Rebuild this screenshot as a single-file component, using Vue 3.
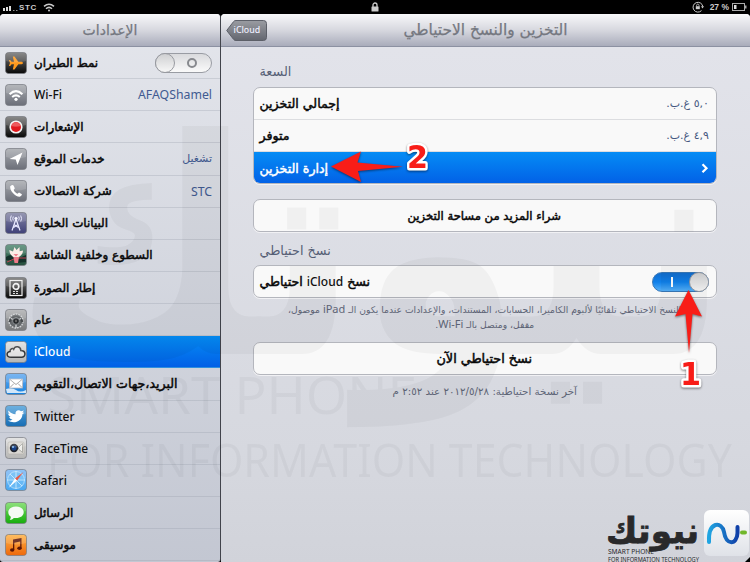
<script setup>
import { ref } from 'vue'

const airplane = ref(false)
const backup = ref(true)
const active = ref('cloud')

const items = [
  { id: 'plane', title: 'نمط الطيران', toggle: true },
  { id: 'wifi', title: 'Wi-Fi', value: 'AFAQShamel' },
  { id: 'notif', title: 'الإشعارات' },
  { id: 'location', title: 'خدمات الموقع', value: 'تشغيل', arValue: true },
  { id: 'phone', title: 'شركة الاتصالات', value: 'STC' },
  { id: 'cell', title: 'البيانات الخلوية' },
  { id: 'wall', title: 'السطوع وخلفية الشاشة' },
  { id: 'frame', title: 'إطار الصورة' },
  { id: 'gear', title: 'عام' },
  { id: 'cloud', title: 'iCloud' },
  { id: 'mail', title: 'البريد،جهات الاتصال،التقويم' },
  { id: 'twitter', title: 'Twitter' },
  { id: 'facetime', title: 'FaceTime' },
  { id: 'safari', title: 'Safari' },
  { id: 'messages', title: 'الرسائل' },
  { id: 'music', title: 'موسيقى' }
]

const isLatin = (s) => /^[A-Za-z]/.test(s)
</script>

<template>
  <div class="screen">
    <div class="status">
      <div class="status-left">
        <svg width="16" height="8" viewBox="0 0 16 8" fill="#ddd">
          <rect x="1" y="5" width="2" height="3" /><rect x="4" y="4" width="2" height="4" /><rect x="7" y="3" width="2" height="5" />
          <rect x="11" y="7" width="1.5" height="1" fill="#888" /><rect x="14" y="7" width="1.5" height="1" fill="#888" />
        </svg>
        <span class="carrier">STC</span>
        <svg width="12" height="9" viewBox="0 0 12 9" fill="none" stroke="#ccc" stroke-width="1.5">
          <path d="M1 3.4Q6-1 11 3.4M3 5.7Q6 3 9 5.7" /><circle cx="6" cy="7.6" r="1" fill="#ccc" stroke="none" />
        </svg>
      </div>
      <svg class="lock" width="8" height="10" viewBox="0 0 8 10">
        <path d="M2 5V3a2 2 0 0 1 4 0v2" fill="none" stroke="#ccc" stroke-width="1.3" /><rect x=".5" y="4.5" width="7" height="5" rx=".5" fill="#ccc" />
      </svg>
      <div class="status-right">
        <svg width="12" height="12" viewBox="0 0 12 12">
          <path d="M9.5 9.6A4.9 4.9 0 1 1 10.8 5.5" fill="none" stroke="#ccc" /><path d="M9 5.2h3l-1.5 2.4z" fill="#ccc" />
          <rect x="3.8" y="5.2" width="4" height="3" fill="#ccc" /><path d="M4.6 5.2V4.3a1.2 1.2 0 0 1 2.4 0v.9" fill="none" stroke="#ccc" stroke-width=".8" />
        </svg>
        <span class="percent">27 %</span>
        <svg width="15" height="8" viewBox="0 0 15 8">
          <rect x=".5" y=".5" width="12" height="7" fill="none" stroke="#aaa" /><rect x="2" y="2" width="2.5" height="4" fill="#ddd" /><rect x="13" y="2.5" width="1.5" height="3" fill="#aaa" />
        </svg>
      </div>
    </div>

    <div class="split">
      <aside class="side">
        <header class="bar"><h1 class="side-title" dir="rtl">الإعدادات</h1></header>
        <ul class="list">
          <li v-for="item in items" :key="item.id" class="item" :class="{ active: active === item.id }" @click="active = item.id">
            <svg class="icon" width="22" height="22" viewBox="0 0 22 22">
              <defs>
                <linearGradient :id="'g-' + item.id" x1="0" y1="0" x2="0" y2="1">
                  <stop offset="0" :class="['top', item.id]" /><stop offset="1" :class="['end', item.id]" />
                </linearGradient>
              </defs>
              <rect x=".5" y=".5" width="21" height="21" rx="3" :fill="`url(#g-${item.id})`" stroke="#777b82" stroke-opacity=".7" />
              <path v-if="item.id === 'plane'" fill="#ff9a1e" d="M18 11c0-.9-1.200-1.300-2.200-1.300h-2.500L9.500 4.500H7.800L9 9.700H6.600L5.200 8H3.900L5 11l-1.100 3h1.300l1.400-1.700H9l-1.200 5.200h1.700l3.800-5.200h2.500c1 0 2.200-.4 2.200-1.300z" />
              <g v-else-if="item.id === 'wifi'" fill="none" stroke="#fff" stroke-width="2.1">
                <path d="M4.6 10.2Q11 4.2 17.4 10.2M7.2 13Q11 9.8 14.8 13" /><circle cx="11" cy="15.3" r="1.6" fill="#fff" stroke="none" />
              </g>
              <g v-else-if="item.id === 'notif'">
                <circle cx="11" cy="11" r="6.6" fill="#f2f2f2" /><circle cx="11" cy="11" r="5" fill="#e0191e" /><path d="M6.6 10a4.5 4.5 0 0 1 8.8 0q-4.4 1.5-8.8 0" fill="#f77" opacity=".4" />
              </g>
              <path v-else-if="item.id === 'location'" fill="#fff" d="M17.5 4.5 12.5 17l-1.8-5.4L4.5 11z" />
              <path v-else-if="item.id === 'phone'" fill="#fff" d="M7 5 5.2 6.3c-.6 4.5 5 10.6 9.7 10.4l2-1.8c.2-.5-.1-.8-2.9-2.4l-1.6 1.2c-1.5-.5-3.5-2.6-3.7-4L9.8 8.4C9 5.6 8 4.5 7 5z" />
              <g v-else-if="item.id === 'cell'" fill="none" stroke="#e8e8ff" stroke-width="1">
                <path d="M11 7 7 18.5M11 7l4 11.5M9 12.5l4.5 3M13 12.5l-4.5 3" stroke-width="1.2" /><circle cx="11" cy="6.5" r="1.2" fill="#fff" />
                <path d="M8.3 4.5a4 4 0 0 0 0 4M13.7 4.5a4 4 0 0 1 0 4M6.3 3.5a6 6 0 0 0 0 6M15.7 3.5a6 6 0 0 1 0 6" />
              </g>
              <g v-else-if="item.id === 'wall'">
                <path d="M1 13q6-4 9 0l-3 4-6-1M12 15l9-4v7l-9 1" fill="#14312a" /><path d="M12 14h9M2 18l7-3" stroke="#c24454" />
                <path d="M11 14C6.5 13 4 9 4.5 6l3.5 1.5L9.5 3l2 3L14.5 3l.2 4.2 3.3-.7C18 10 15.500 13 11 14z" fill="#fde9e4" /><path d="M8.500 10l2.500 2.500 2.300-2.500M8.500 13l1 6h3.500l1-6z" fill="#ef7b89" />
              </g>
              <g v-else-if="item.id === 'frame'" fill="none" stroke="#f0f0f0">
                <rect x="5" y="3.5" width="12" height="15" stroke-width="1.2" /><circle cx="11" cy="9.5" r="2.8" stroke-width="1.7" /><path d="M8 14.5h6M8 16.5h6" stroke-width=".9" stroke-dasharray="2 1" />
              </g>
              <g v-else-if="item.id === 'gear'">
                <circle cx="11" cy="12" r="7" fill="#63676a" stroke="#d0d2d4" stroke-width="1.4" stroke-dasharray="1.8 .9" />
                <path d="M4.500 13a6.800 6.800 0 0 1 13 0" fill="none" stroke="#45494c" stroke-width="2" />
                <path d="M6 9.500 9 11M16 9.500 13 11M11 15v4" stroke="#d5d7d9" stroke-width="1.3" />
                <circle cx="11" cy="12" r="3.4" fill="#24282b" stroke="#8c9093" /><circle cx="11" cy="12" r="1.2" fill="#666" />
              </g>
              <path v-else-if="item.id === 'cloud'" d="M6 16.2c-5 0-5-5.4-1-5.700C5 7.5 8 7 8.700 8.200 9.900 4.500 15.800 5.100 15.800 9.600c5.500 0 5.300 6.600.7 6.600z" fill="#f4f4f4" fill-opacity=".6" stroke="#343638" stroke-width="1.5" />
              <g v-else-if="item.id === 'mail'">
                <path d="M1 16q6-2 10 1t10 0v3H2z" fill="#fff" opacity=".8" /><rect x="4.5" y="6" width="13" height="9" fill="#fff" stroke="#b8b8c0" stroke-width=".8" />
                <path d="m5 6.5 6 5 6-5M5 14.5l4-4M17 14.5l-4-4" fill="none" stroke="#999" stroke-width=".9" />
              </g>
              <path v-else-if="item.id === 'twitter'" fill="#fff" d="M3.5 5.500C5.500 8 8 9.200 10.500 9.200 10 6 13.500 4 16 6.200l3-.8-1.600 2.200 2 .2-2 1.400C17.500 16 9 19.500 3 15.600c2 0 3.500-.4 4.500-1.200-1.700-.2-2.800-1-3.300-2.400h1.500C4 11.200 3.200 10 3.200 8.500l1.500.4C3.300 7.800 3 6.800 3.500 5.500z" />
              <g v-else-if="item.id === 'facetime'">
                <rect x="3" y="5" width="16" height="12" rx="1.5" fill="#dad8d3" stroke="#b5b3ae" stroke-width=".7" /><path d="m13.500 10.500 4-4v9l-4-3.500z" fill="#efefec" stroke="#9b9a96" stroke-width=".8" />
                <circle cx="9" cy="11" r="4.2" fill="#20242d" /><circle cx="9" cy="11" r="2.5" fill="#163f86" /><circle cx="8" cy="10" r="1" fill="#8fc3ef" />
              </g>
              <g v-else-if="item.id === 'safari'">
                <circle cx="11" cy="11" r="8.5" fill="#68b9f5" stroke="#bfe3fb" stroke-width=".8" /><path d="M11 2v18M2 11h18M5 5l12 12M5 17 17 5" stroke="#d4efff" stroke-width=".8" />
                <path d="m18.500 3-6.500 8.500-2-2z" fill="#e33d28" /><path d="m3.500 19 6.500-9.500 2 2z" fill="#fff" />
              </g>
              <path v-else-if="item.id === 'messages'" fill="#f5fbf4" d="M11 4.500c4.600 0 7.700 2.500 7.700 5.800s-3.100 5.800-7.700 5.800c-.8 0-1.500 0-2.200-.2-1 1.200-2.500 1.900-4.200 1.900.8-.8 1.200-1.700 1.200-3-1.700-1.100-2.500-2.700-2.500-4.500 0-3.300 3.100-5.800 7.700-5.800z" />
              <g v-else-if="item.id === 'music'" fill="#5c1606">
                <path d="M8 5.500 16.500 4v10h-1.300V7.600l-5.900 1.200V16H8z" /><ellipse cx="7.200" cy="16" rx="2.200" ry="1.800" /><ellipse cx="14.500" cy="14.300" rx="2.200" ry="1.800" />
              </g>
              <path d="M1 3.500Q1 1 3.500 1h15Q21 1 21 3.500V9Q11 12 1 9z" fill="#fff" opacity=".14" />
            </svg>
            <span :class="[isLatin(item.title) ? 'latin' : 'arabic', { wide: item.id === 'mail' }]">{{ item.title }}</span>
            <button v-if="item.toggle" class="switch" :class="{ on: airplane }" @click.stop="airplane = !airplane"><i class="knob"></i><i class="zero"></i></button>
            <span v-if="item.value" class="value" :class="{ small: item.arValue }">{{ item.value }}</span>
          </li>
        </ul>
      </aside>

      <main class="main">
        <header class="bar">
          <button class="back">
            <svg width="41" height="21" viewBox="0 0 41 21">
              <defs><linearGradient id="backFill" x1="0" y1="0" x2="0" y2="1"><stop offset="0" stop-color="#9a9ca2" /><stop offset="1" stop-color="#63666f" /></linearGradient></defs>
              <path d="M.7 10.500 7.500 1.700Q8.200.5 10 .5h27.500q3 0 3 3v14q0 3-3 3H10q-1.800 0-2.500-1.200z" fill="url(#backFill)" stroke="#5c5f68" />
            </svg>
            <span>iCloud</span>
          </button>
          <h1 class="main-title" dir="rtl">التخزين والنسخ الاحتياطي</h1>
        </header>
        <div class="content">
          <h2 class="label">السعة</h2>
          <section class="card">
            <div class="row"><span class="arabic">إجمالي التخزين</span><span class="size" dir="rtl">٥,٠ غ.ب.</span></div>
            <div class="row"><span class="arabic">متوفر</span><span class="size" dir="rtl">٤,٩ غ.ب.</span></div>
            <div class="row picked">
              <span class="arabic">إدارة التخزين</span>
              <svg width="8" height="11" viewBox="0 0 8 11"><path d="m1.500 1.300 4 4-4 4" fill="none" stroke="#fff" stroke-width="2.200" /></svg>
            </div>
          </section>
          <section class="card buy"><div class="row center"><span class="arabic">شراء المزيد من مساحة التخزين</span></div></section>
          <h2 class="label second">نسخ احتياطي</h2>
          <section class="card">
            <div class="row">
              <span class="arabic" dir="rtl">نسخ <b class="latin">iCloud</b> احتياطي</span>
              <button class="switch" :class="{ on: backup }" @click="backup = !backup"><i class="one"></i><i class="knob"></i></button>
            </div>
          </section>
          <p class="note" dir="rtl"><span>النسخ الاحتياطي تلقائيًا لألبوم الكاميرا، الحسابات، المستندات، والإعدادات عندما يكون الـ <b>iPad</b> موصول،</span><span>مقفل، ومتصل بالـ <b>Wi-Fi</b>.</span></p>
          <section class="card"><div class="row center now"><span class="arabic">نسخ احتياطي الآن</span></div></section>
          <p class="note last" dir="rtl"><span>آخر نسخة احتياطية: ٢٠١٢/٥/٢٨ عند ٢:٥٢ م</span></p>
        </div>
      </main>
    </div>

    <svg class="overlay" width="750" height="562" viewBox="0 0 750 562">
      <g fill="#000" opacity=".032">
        <text class="mark-ar" x="14" y="354" textLength="715" lengthAdjust="spacingAndGlyphs">نيوتك</text>
        <text class="mark first" x="47" y="414" textLength="370" lengthAdjust="spacingAndGlyphs">SMART PHONE</text>
        <text class="mark" x="47" y="477" textLength="685" lengthAdjust="spacingAndGlyphs">FOR INFORMATION TECHNOLOGY</text>
      </g>
      <g class="arrows" fill="#f81d18">
        <path d="M331 166.500 361 151.500 357.500 162.500 403 166.800 358 171 361 182z" />
        <path d="M688.500 290 702 316.500 692.500 314 689 353 685.500 314 675 316.500z" />
        <text class="num" x="407" y="168" textLength="21" lengthAdjust="spacingAndGlyphs">2</text>
        <text class="num" x="680" y="385" textLength="21" lengthAdjust="spacingAndGlyphs">1</text>
      </g>
      <g fill="#29292b">
        <text class="brand" x="606" y="543" textLength="93" lengthAdjust="spacingAndGlyphs">نيوتك</text>
        <text class="tag" x="608" y="554" textLength="46" lengthAdjust="spacingAndGlyphs">SMART PHONE</text>
        <text class="tag" x="608" y="561.5" textLength="91" lengthAdjust="spacingAndGlyphs">FOR INFORMATION TECHNOLOGY</text>
      </g>
      <defs>
        <linearGradient id="tile" x1="0" y1="0" x2="0" y2="1"><stop offset="0" stop-color="#fff" /><stop offset="1" stop-color="#dfe2e8" /></linearGradient>
        <linearGradient id="wave" x1="0" x2="1"><stop offset="0" stop-color="#20a5e2" /><stop offset="1" stop-color="#1040a8" /></linearGradient>
      </defs>
      <rect x="704" y="510" width="45" height="46" rx="6" fill="url(#tile)" />
      <path d="M709 542C708 521 722 521 724 532C726 546 737 545 737.500 533V527" fill="none" stroke="url(#wave)" stroke-width="4" stroke-linecap="round" />
      <path d="M742 532.500h3" stroke="#70b72b" stroke-width="4" stroke-linecap="round" />
      <path d="M750 557v5h-5z" />
    </svg>
  </div>
</template>

<style>
body {
  margin: 0;
  background: #000;
  overflow: hidden;
}
</style>

<style scoped>
.screen {
  position: relative;
  width: 750px;
  height: 562px;
  overflow: hidden;
  background: #000;
  font-family: "Noto Sans", "DejaVu Sans", sans-serif;
}

.status {
  height: 14px;
  display: grid;
  grid-template-columns: 1fr auto 1fr;
  align-items: center;
  padding: 0 3px 0 2px;
  box-sizing: border-box;
  color: #ccc;
  font: bold 8px "Liberation Sans", sans-serif;
}

.status svg { display: block; }
.status-left, .status-right { display: flex; align-items: center; }
.status-right { justify-content: flex-end; gap: 3px; }
.carrier { margin: 0 6px 0 1px; letter-spacing: .7px; }
.percent { margin-left: 3px; font-size: 8.5px; }

.split { display: flex; height: 548px; }

.side {
  width: 220px;
  flex: none;
  border-right: 1.5px solid #41434b;
  border-radius: 4px 4px 3px 3px;
  overflow: hidden;
  background: linear-gradient(#e4e6ec, #c3c7d2);
}

.main {
  flex: 1;
  border-radius: 4px 4px 0 0;
  overflow: hidden;
  background: linear-gradient(#e3e4eb, #d6d8df 80%, #d1d3da);
}

.bar {
  height: 33px;
  box-sizing: border-box;
  border-bottom: 1px solid #8c91a2;
  background: linear-gradient(#f8f8fa, #d7d8df 50%, #a9acbb);
  display: flex;
  align-items: center;
  justify-content: center;
  position: relative;
}

h1, h2, p { margin: 0; font-weight: normal; }

h1 {
  font: 15.4px "DejaVu Sans", sans-serif;
  color: #747780;
  -webkit-text-stroke: .25px #747780;
  white-space: nowrap;
}

.side-title { font-size: 14px; }

.list { list-style: none; margin: 0; padding: 0; }

.item {
  height: 32.15px;
  box-sizing: border-box;
  border-bottom: 1px solid rgba(150, 155, 170, .3);
  display: flex;
  align-items: center;
  padding: 0 8px 0 5px;
  white-space: nowrap;
}

.active { background: linear-gradient(#058cf5, #0260e6); }
.icon { flex: none; margin-right: 7px; }
.arabic { font: 11.6px "DejaVu Sans", sans-serif; color: #090909; -webkit-text-stroke: .5px; white-space: nowrap; }
.item .arabic { font-size: 11.9px; }
.item .wide { font-size: 12.6px; }
.latin { font: 500 12px "Noto Sans", sans-serif; color: #111; -webkit-text-stroke: 0; }
.active .latin { color: #fff; }
.value { margin-left: auto; color: #415a91; font-size: 12.3px; }
.small { font: 11px "DejaVu Sans", sans-serif; }

.top { stop-color: #a8abb0; }
.end { stop-color: #6c6f79; }
.top.plane, .top.notif, .top.frame { stop-color: #777; }
.end.plane, .end.notif, .end.frame { stop-color: #080808; }
.top.cell { stop-color: #8586a6; }
.end.cell { stop-color: #3f4178; }
.top.wall { stop-color: #528b74; }
.end.wall { stop-color: #254d3c; }
.top.gear { stop-color: #b0b1b3; }
.end.gear { stop-color: #77797b; }
.top.cloud, .top.facetime { stop-color: #e0e0e0; }
.end.cloud, .end.facetime { stop-color: #b6b6b4; }
.top.mail { stop-color: #65aaf0; }
.end.mail { stop-color: #1683e0; }
.top.twitter { stop-color: #55a4dc; }
.end.twitter { stop-color: #176db4; }
.top.safari { stop-color: #7eb8f4; }
.end.safari { stop-color: #48a8f1; }
.top.messages { stop-color: #78dc63; }
.end.messages { stop-color: #16ad0d; }
.top.music { stop-color: #ffb347; }
.end.music { stop-color: #ee680b; }

.switch {
  position: relative;
  width: 57px;
  height: 20px;
  margin: 0 0 0 auto;
  padding: 0;
  border: 1px solid #999ca3;
  border-radius: 10px;
  background: linear-gradient(#d9dadd, #fafafa);
}

.knob {
  position: absolute;
  top: -1px;
  left: -1px;
  width: 18px;
  height: 18px;
  border: 1px solid #989aa0;
  border-radius: 50%;
  background: linear-gradient(#cfd0d2, #f7f7f7);
}

.zero {
  position: absolute;
  left: 31px;
  top: 4px;
  width: 6px;
  height: 6px;
  border: 2px solid #87898e;
  border-radius: 50%;
}

.on { background: linear-gradient(#126ccc, #0f80ea 50%, #55b0f8); border-color: #3978b7; }
.on .knob { left: auto; right: -1px; }
.one { position: absolute; left: 18px; top: 4px; width: 2px; height: 10px; background: #fff; }

.back { position: absolute; left: 4.5px; top: 5.5px; border: 0; padding: 0; background: none; width: 41px; height: 21px; }
.back svg { display: block; }
.back span { position: absolute; left: 8px; top: 4px; font: 500 8.8px "Noto Sans", sans-serif; color: #eef; }

.content { padding: 18px 33px 0 31.5px; }
.label { font: 12.8px/14px "DejaVu Sans", sans-serif; color: #555e75; margin: 0 0 8px 7px; }
.label.second { margin: 12px 0 6.5px 7px; }

.card {
  border: 1px solid #b4b6bd;
  border-radius: 7px;
  background: #f9f9f9;
  overflow: hidden;
  box-shadow: 0 1px #f1f1f4;
  height: 31px;
}

.card:first-of-type { height: 95px; }
.buy { margin-top: 15px; }

.row {
  height: 32px;
  box-sizing: border-box;
  border-bottom: 1px solid #dcdde0;
  display: flex;
  align-items: center;
  justify-content: space-between;
  padding: 0 7px 0 6px;
}

.row:last-child { border-bottom: 0; }
.row .arabic { font-size: 12.6px; }
.center { justify-content: center; }
.center .arabic { font-size: 11.6px; }
.now .arabic { font-size: 12.8px; }
.picked { background: linear-gradient(#058cf5, #0260e6); }
.picked .arabic { color: #fff; }
.size { font: 11px "DejaVu Sans", sans-serif; color: #45577f; }

.note { text-align: center; font: 9.2px/14px "DejaVu Sans", sans-serif; color: #5f6678; height: 44px; padding-top: 4px; box-sizing: border-box; white-space: nowrap; }
.note span { display: block; }
.note b { font: 11px/13px "Noto Sans", sans-serif; }
.last { padding-top: 9px; font-size: 10.3px; }

.overlay { position: absolute; left: 0; top: 0; pointer-events: none; }
.mark-ar { font: bold 300px "DejaVu Sans", sans-serif; }
.mark { font: 46px "Noto Sans", sans-serif; }
.first { font-size: 51px; }
.arrows { filter: drop-shadow(0 1px 1px rgba(0, 0, 0, .5)); }
.num { font: bold 32px "DejaVu Sans", sans-serif; stroke: #fff; stroke-width: 5px; paint-order: stroke; stroke-linejoin: round; }
.brand { font: bold 35px "DejaVu Sans", sans-serif; stroke: #29292b; stroke-width: .8px; }
.tag { font: 7px "Noto Sans", sans-serif; }
</style>
